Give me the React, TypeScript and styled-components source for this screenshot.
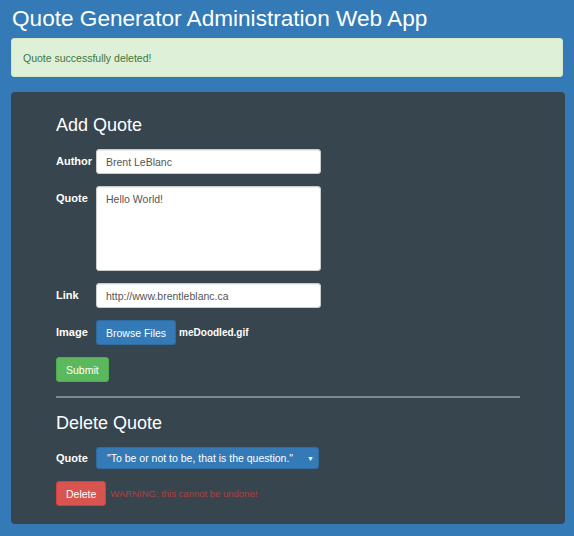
import styled, { createGlobalStyle } from "styled-components";

const GlobalStyle = createGlobalStyle`
    html, body {
        margin: 0;
        padding: 0;
        background-color: #337ab7;
        font-family: "Liberation Sans", Arial, sans-serif;
    }
`;

const Page = styled.div`
    padding: 0 9px 12px 11px;
    min-height: 536px;
    box-sizing: border-box;
`;

const Title = styled.h1`
    margin: 0;
    padding: 4px 0 0 1px;
    height: 34px;
    line-height: 30px;
    font-size: 22.6px;
    font-weight: normal;
    color: #fff;
`;

const Alert = styled.div`
    height: 39px;
    box-sizing: border-box;
    display: flex;
    align-items: center;
    padding: 0 11px;
    background-color: #dff0d8;
    border: 1px solid #d6e9c6;
    border-radius: 3px;
    color: #3c763d;
    font-size: 10.5px;
    margin-bottom: 15px;
    margin-right: 2px;
`;

const Panel = styled.div`
    background-color: #37454f;
    border-radius: 4px;
    padding: 22px 45px 18px 45px;
    height: 432px;
    box-sizing: border-box;
`;

const Heading = styled.h2`
    margin: 0 0 13px 0;
    font-size: 18px;
    line-height: 22px;
    font-weight: normal;
    color: #fff;
`;

const Form = styled.form`
    display: flex;
    flex-direction: column;
    gap: 12px;
`;

const Row = styled.div`
    display: flex;
    align-items: flex-start;
`;

const Label = styled.label<{ $line?: number }>`
    width: 40px;
    flex-shrink: 0;
    font-size: 11px;
    font-weight: bold;
    color: #fff;
    line-height: ${(p) => p.$line ?? 25}px;
`;

const TextInput = styled.input`
    width: 225px;
    height: 25px;
    box-sizing: border-box;
    border: 1px solid #ccc;
    border-radius: 3px;
    padding: 0 9px;
    font-family: inherit;
    font-size: 10.5px;
    color: #555;
    background: #fff;
    box-shadow: inset 0 1px 1px rgba(0, 0, 0, 0.075);
    outline: none;
`;

const TextArea = styled.textarea`
    width: 225px;
    height: 85px;
    box-sizing: border-box;
    border: 1px solid #ccc;
    border-radius: 3px;
    padding: 5px 9px;
    font-family: inherit;
    font-size: 10.5px;
    line-height: 14px;
    color: #555;
    box-shadow: inset 0 1px 1px rgba(0, 0, 0, 0.075);
    resize: none;
    outline: none;
`;

const variants = {
    primary: { bg: "#337ab7", border: "#2e6da4" },
    success: { bg: "#5cb85c", border: "#4cae4c" },
    danger: { bg: "#d9534f", border: "#d43f3a" },
};

const Button = styled.button<{ $kind: keyof typeof variants }>`
    height: 25px;
    box-sizing: border-box;
    padding: 0 9px;
    border: 1px solid ${(p) => variants[p.$kind].border};
    background-color: ${(p) => variants[p.$kind].bg};
    border-radius: 3px;
    color: #fff;
    font-family: inherit;
    font-size: 10.5px;
    cursor: pointer;
`;

const FileName = styled.span`
    margin-left: 3px;
    color: #fff;
    font-size: 10px;
    font-weight: bold;
    line-height: 25px;
`;

const Divider = styled.hr`
    margin: 14px 0 14px 0;
    width: 464px;
    border: none;
    height: 2px;
    background-color: #7d8790;
`;

const Select = styled.div`
    width: 223px;
    height: 22px;
    box-sizing: border-box;
    display: flex;
    align-items: center;
    justify-content: space-between;
    padding: 0 4px 0 10px;
    background-color: #337ab7;
    border: 1px solid #2e6da4;
    border-radius: 3px;
    color: #fff;
    font-size: 10.5px;
    white-space: nowrap;
`;

const Caret = styled.span`
    font-size: 7px;
`;

const Warning = styled.span`
    margin-left: 4px;
    color: #b0413e;
    font-size: 9.5px;
    line-height: 25px;
`;

export default function App() {
    return (
        <>
            <GlobalStyle />
            <Page>
                <Title>Quote Generator Administration Web App</Title>
                <Alert>Quote successfully deleted!</Alert>
                <Panel>
                    <Heading>Add Quote</Heading>
                    <Form>
                        <Row>
                            <Label>Author</Label>
                            <TextInput defaultValue="Brent LeBlanc" />
                        </Row>
                        <Row>
                            <Label>Quote</Label>
                            <TextArea defaultValue="Hello World!" />
                        </Row>
                        <Row>
                            <Label>Link</Label>
                            <TextInput defaultValue="http://www.brentleblanc.ca" />
                        </Row>
                        <Row>
                            <Label>Image</Label>
                            <Button type="button" $kind="primary">Browse Files</Button>
                            <FileName>meDoodled.gif</FileName>
                        </Row>
                        <Row>
                            <Button type="button" $kind="success">Submit</Button>
                        </Row>
                    </Form>
                    <Divider />
                    <Heading>Delete Quote</Heading>
                    <Form>
                        <Row>
                            <Label $line={22}>Quote</Label>
                            <Select>
                                <span>"To be or not to be, that is the question."</span>
                                <Caret>▼</Caret>
                            </Select>
                        </Row>
                        <Row>
                            <Button type="button" $kind="danger">Delete</Button>
                            <Warning>WARNING: this cannot be undone!</Warning>
                        </Row>
                    </Form>
                </Panel>
            </Page>
        </>
    );
}
